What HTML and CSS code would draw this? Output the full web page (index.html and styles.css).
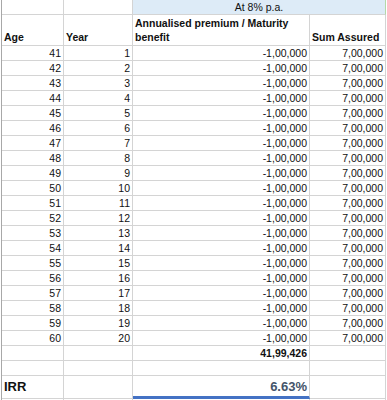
FILE: index.html
```html
<!DOCTYPE html>
<html>
<head>
    <meta charset="utf-8">
    <title>IRR</title>
    <link rel="stylesheet" href="styles.css">
</head>
<body>
    <table class="sheet">
        <colgroup>
            <col class="col-age">
            <col class="col-year">
            <col class="col-prem">
            <col class="col-sum">
        </colgroup>
        <tr class="row-top">
            <td></td>
            <td></td>
            <td class="rate" colspan="2">At 8% p.a.</td>
        </tr>
        <tr class="row-head">
            <td>Age</td>
            <td>Year</td>
            <td>Annualised premium / Maturity<br>benefit</td>
            <td>Sum Assured</td>
        </tr>
        <tr><td class="num">41</td><td class="num">1</td><td class="num">-1,00,000</td><td class="num">7,00,000</td></tr>
        <tr><td class="num">42</td><td class="num">2</td><td class="num">-1,00,000</td><td class="num">7,00,000</td></tr>
        <tr><td class="num">43</td><td class="num">3</td><td class="num">-1,00,000</td><td class="num">7,00,000</td></tr>
        <tr><td class="num">44</td><td class="num">4</td><td class="num">-1,00,000</td><td class="num">7,00,000</td></tr>
        <tr><td class="num">45</td><td class="num">5</td><td class="num">-1,00,000</td><td class="num">7,00,000</td></tr>
        <tr><td class="num">46</td><td class="num">6</td><td class="num">-1,00,000</td><td class="num">7,00,000</td></tr>
        <tr><td class="num">47</td><td class="num">7</td><td class="num">-1,00,000</td><td class="num">7,00,000</td></tr>
        <tr><td class="num">48</td><td class="num">8</td><td class="num">-1,00,000</td><td class="num">7,00,000</td></tr>
        <tr><td class="num">49</td><td class="num">9</td><td class="num">-1,00,000</td><td class="num">7,00,000</td></tr>
        <tr><td class="num">50</td><td class="num">10</td><td class="num">-1,00,000</td><td class="num">7,00,000</td></tr>
        <tr><td class="num">51</td><td class="num">11</td><td class="num">-1,00,000</td><td class="num">7,00,000</td></tr>
        <tr><td class="num">52</td><td class="num">12</td><td class="num">-1,00,000</td><td class="num">7,00,000</td></tr>
        <tr><td class="num">53</td><td class="num">13</td><td class="num">-1,00,000</td><td class="num">7,00,000</td></tr>
        <tr><td class="num">54</td><td class="num">14</td><td class="num">-1,00,000</td><td class="num">7,00,000</td></tr>
        <tr><td class="num">55</td><td class="num">15</td><td class="num">-1,00,000</td><td class="num">7,00,000</td></tr>
        <tr><td class="num">56</td><td class="num">16</td><td class="num">-1,00,000</td><td class="num">7,00,000</td></tr>
        <tr><td class="num">57</td><td class="num">17</td><td class="num">-1,00,000</td><td class="num">7,00,000</td></tr>
        <tr><td class="num">58</td><td class="num">18</td><td class="num">-1,00,000</td><td class="num">7,00,000</td></tr>
        <tr><td class="num">59</td><td class="num">19</td><td class="num">-1,00,000</td><td class="num">7,00,000</td></tr>
        <tr><td class="num">60</td><td class="num">20</td><td class="num">-1,00,000</td><td class="num">7,00,000</td></tr>
        <tr><td></td><td></td><td class="num total">41,99,426</td><td></td></tr>
        <tr><td></td><td></td><td></td><td></td></tr>
        <tr class="row-irr">
            <td class="irr-label">IRR</td>
            <td></td>
            <td class="num irr-value">6.63%</td>
            <td></td>
        </tr>
        <tr><td></td><td></td><td></td><td></td></tr>
    </table>
</body>
</html>
```

FILE: styles.css
```css
* {
    box-sizing: border-box;
}
body {
    margin: 0;
    background: #fff;
    font-family: "Liberation Sans", Arial, sans-serif;
    font-size: 10.5px;
    color: #111;
}
.sheet {
    margin-left: 1px;
    width: 385px;
    table-layout: fixed;
    border-collapse: separate;
    border-spacing: 0;
    border-left: 1px solid #a8a8a8;
}
.col-age { width: 62px; }
.col-year { width: 69px; }
.col-prem { width: 177px; }
.col-sum { width: 76px; }

.sheet td {
    height: 15px;
    padding: 0 2px 0 2px;
    line-height: 14px;
    vertical-align: bottom;
    white-space: nowrap;
    border-right: 1px solid #d4d4d4;
    border-bottom: 1px solid #d4d4d4;
}
.sheet td.num { text-align: right; padding-right: 2px; }

.row-top td { height: 15px; }
.sheet td.rate {
    background: #ddebf7;
    text-align: center;
    border-right-color: #b4d8a8;
}
.row-head td {
    height: 31px;
    font-weight: bold;
    padding-bottom: 1px;
}
.sheet td.total { font-weight: bold; }

.row-irr td {
    height: 23px;
    line-height: 16px;
}
.sheet td.irr-label {
    font-size: 13px;
    font-weight: bold;
    padding-bottom: 3px;
}
.sheet td.irr-value {
    font-size: 13px;
    font-weight: bold;
    color: #44546a;
    border-bottom: 3px solid #4472c4;
    padding-bottom: 1px;
}
```
